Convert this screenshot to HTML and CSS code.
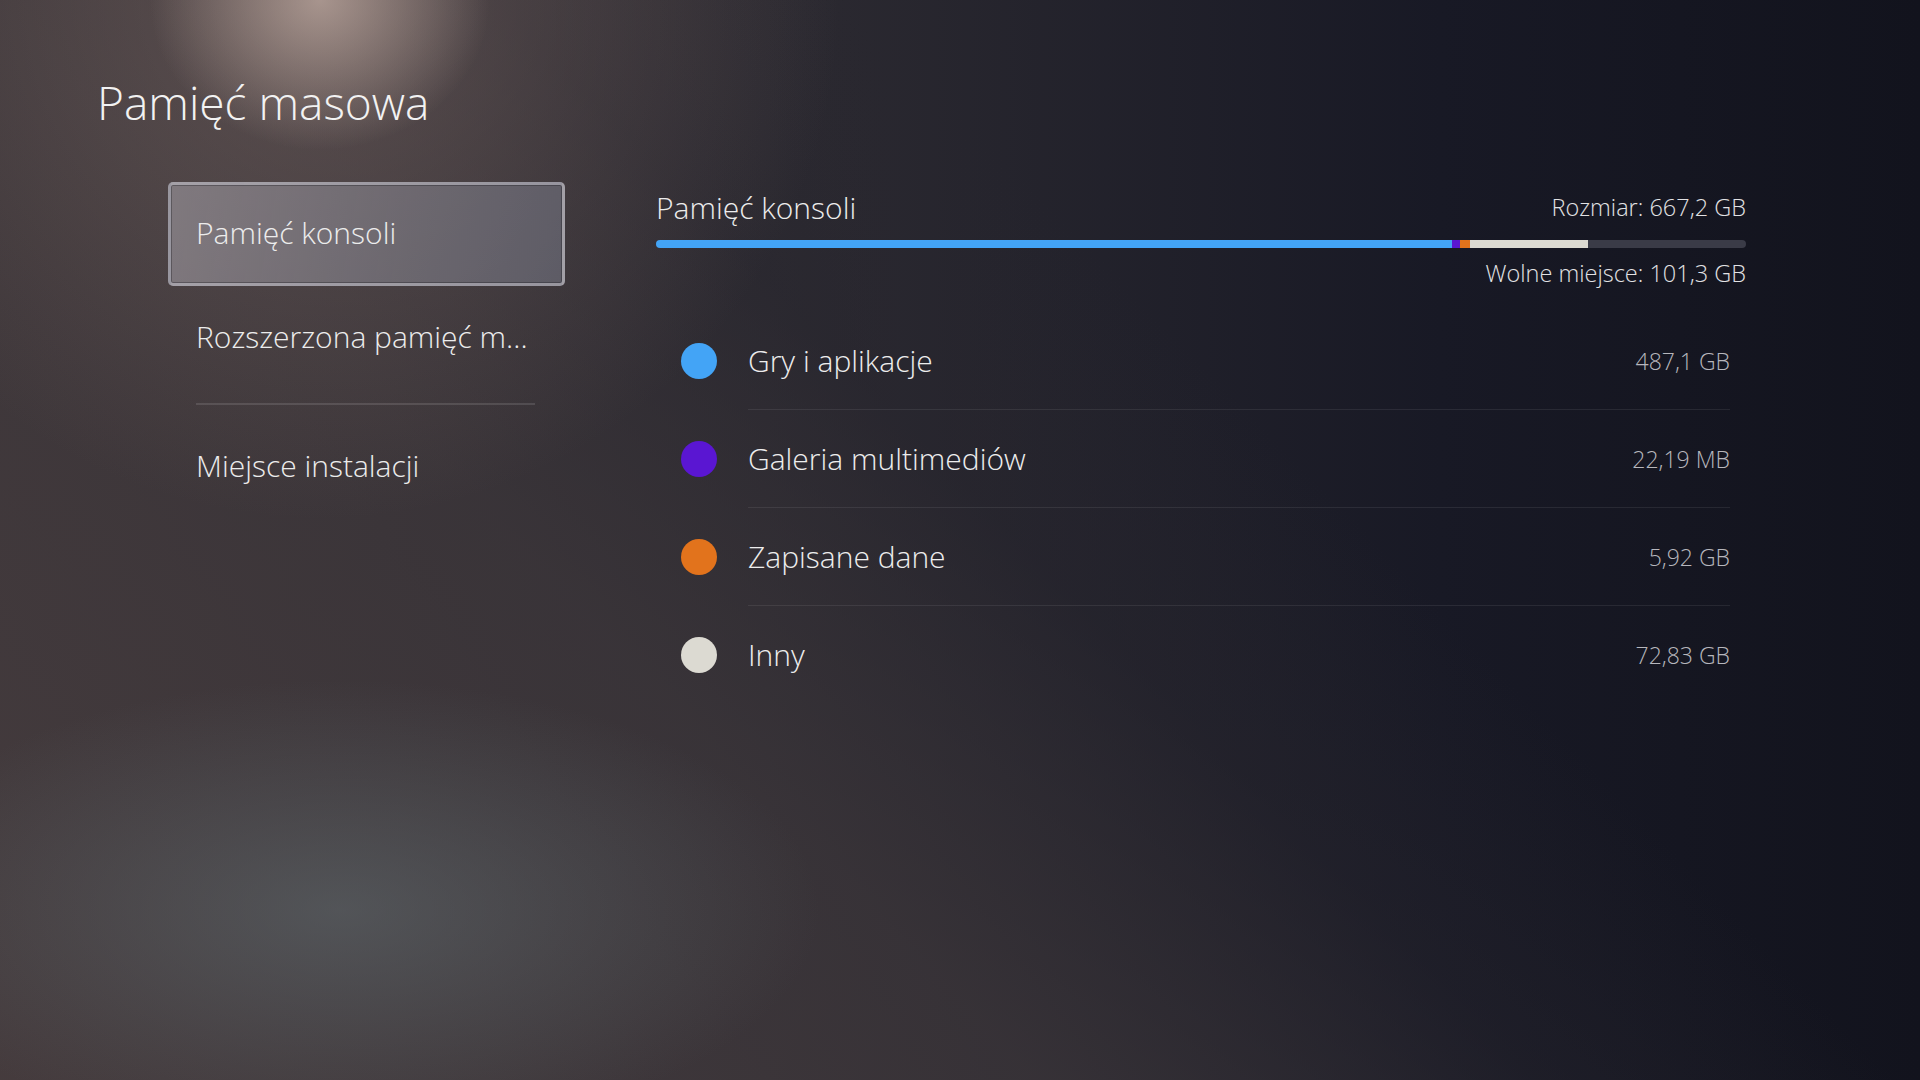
FILE: index.html
```html
<!DOCTYPE html>
<html lang="pl">
<head>
    <meta charset="UTF-8">
    <meta name="viewport" content="width=device-width, initial-scale=1.0">
    <title>Pamięć masowa</title>
    <link rel="stylesheet" href="styles.css">
</head>
<body>
    <div class="screen">
        <h1 class="title">Pamięć masowa</h1>
        <div class="content">
            <div class="nav">
                <div class="nav-item selected">Pamięć konsoli</div>
                <div class="nav-item">Rozszerzona pamięć m...</div>
                <div class="nav-divider"></div>
                <div class="nav-item">Miejsce instalacji</div>
            </div>
            <div class="panel">
                <div class="panel-head">
                    <span class="panel-title">Pamięć konsoli</span>
                    <span class="panel-info">Rozmiar: 667,2 GB</span>
                </div>
                <div class="bar">
                    <div class="seg seg-games" style="width: 73.0%;"></div>
                    <div class="seg seg-media" style="width: 0.75%;"></div>
                    <div class="seg seg-saves" style="width: 0.9%;"></div>
                    <div class="seg seg-other" style="width: 10.9%;"></div>
                </div>
                <div class="panel-free">Wolne miejsce: 101,3 GB</div>
                <div class="list">
                    <div class="row">
                        <span class="dot dot-games"></span>
                        <div class="row-body">
                            <span class="row-label">Gry i aplikacje</span>
                            <span class="row-value">487,1 GB</span>
                        </div>
                    </div>
                    <div class="row">
                        <span class="dot dot-media"></span>
                        <div class="row-body">
                            <span class="row-label">Galeria multimediów</span>
                            <span class="row-value">22,19 MB</span>
                        </div>
                    </div>
                    <div class="row">
                        <span class="dot dot-saves"></span>
                        <div class="row-body">
                            <span class="row-label">Zapisane dane</span>
                            <span class="row-value">5,92 GB</span>
                        </div>
                    </div>
                    <div class="row">
                        <span class="dot dot-other"></span>
                        <div class="row-body">
                            <span class="row-label">Inny</span>
                            <span class="row-value">72,83 GB</span>
                        </div>
                    </div>
                </div>
            </div>
        </div>
    </div>
</body>
</html>
```

FILE: styles.css
```css
html, body {
    margin: 0;
    height: 100%;
}
body {
    font-family: "Open Sans", "Noto Sans", sans-serif;
    font-weight: 300;
    color: #ececec;
    overflow: hidden;
    background-color: #14151f;
    background-image:
        radial-gradient(ellipse 170px 150px at 320px 0, rgba(200, 178, 168, 0.7), rgba(200, 178, 168, 0) 100%),
        radial-gradient(ellipse 520px 520px at 320px 0, rgba(140, 118, 112, 0.45), rgba(140, 118, 112, 0) 100%),
        radial-gradient(ellipse 480px 230px at 340px 910px, rgba(98, 108, 112, 0.55), rgba(98, 108, 112, 0) 100%),
        linear-gradient(46deg, rgba(70, 60, 62, 0.9) 0%, rgba(60, 54, 58, 0.75) 35%, rgba(40, 38, 46, 0.4) 52%, rgba(20, 21, 31, 0) 64%),
        linear-gradient(90deg, #3a3437 0%, #2c2a31 40%, #181925 75%, #12131d 100%);
}
.screen {
    padding: 72px 0 0 97px;
}
.title {
    margin: 0;
    font-size: 46px;
    font-weight: 300;
    line-height: 60px;
    color: #f2f2f2;
}

/* layout */
.content {
    display: flex;
    margin-top: 50px;
}
.nav {
    width: 397px;
    margin-left: 71px;
    display: flex;
    flex-direction: column;
}
.nav-item {
    height: 94px;
    padding-bottom: 4px;
    display: flex;
    align-items: center;
    padding-left: 25px;
    border: 3px solid transparent;
    border-radius: 5px;
    font-size: 30px;
    color: #ececec;
    white-space: nowrap;
}
.nav-item.selected {
    background: linear-gradient(100deg, rgba(142, 136, 142, 0.78) 0%, rgba(122, 119, 128, 0.72) 60%, rgba(106, 106, 118, 0.72) 100%);
    border-color: rgba(190, 188, 196, 0.6);
    box-shadow: inset 0 0 0 1px rgba(30, 28, 34, 0.35);
}
.nav-divider {
    height: 2px;
    margin: 13px 30px 10px 28px;
    background-color: rgba(255, 255, 255, 0.12);
}

/* storage panel */
.panel {
    width: 1090px;
    margin-left: 91px;
    margin-top: 5px;
}
.panel-head {
    display: flex;
    justify-content: space-between;
    align-items: center;
    height: 40px;
}
.panel-title {
    font-size: 30px;
}
.panel-info, .panel-free {
    font-size: 23.5px;
    color: #e2e2e4;
}
.bar {
    display: flex;
    height: 8px;
    margin-top: 13px;
    border-radius: 4px;
    overflow: hidden;
    background-color: #3a3b47;
}
.seg-games { background-color: #43a4f6; }
.seg-media { background-color: #5a16d2; }
.seg-saves { background-color: #e2731c; }
.seg-other { background-color: #dcdad2; }
.panel-free {
    text-align: right;
    line-height: 32px;
    margin-top: 9px;
}
.list {
    margin-top: 23px;
    padding-left: 25px;
    padding-right: 16px;
}
.row {
    display: flex;
    align-items: center;
}
.dot {
    width: 36px;
    height: 36px;
    border-radius: 50%;
    margin-right: 31px;
    flex-shrink: 0;
}
.dot-games { background-color: #43a4f6; }
.dot-media { background-color: #5a16d2; }
.dot-saves { background-color: #e2731c; }
.dot-other { background-color: #dcdad2; }
.row-body {
    flex: 1;
    height: 97px;
    display: flex;
    justify-content: space-between;
    align-items: center;
    border-bottom: 1px solid rgba(255, 255, 255, 0.08);
}
.row:last-child .row-body {
    border-bottom: none;
}
.row-label {
    font-size: 30px;
    color: #ededed;
}
.row-value {
    font-size: 23px;
    color: #b7b7bd;
}
```
